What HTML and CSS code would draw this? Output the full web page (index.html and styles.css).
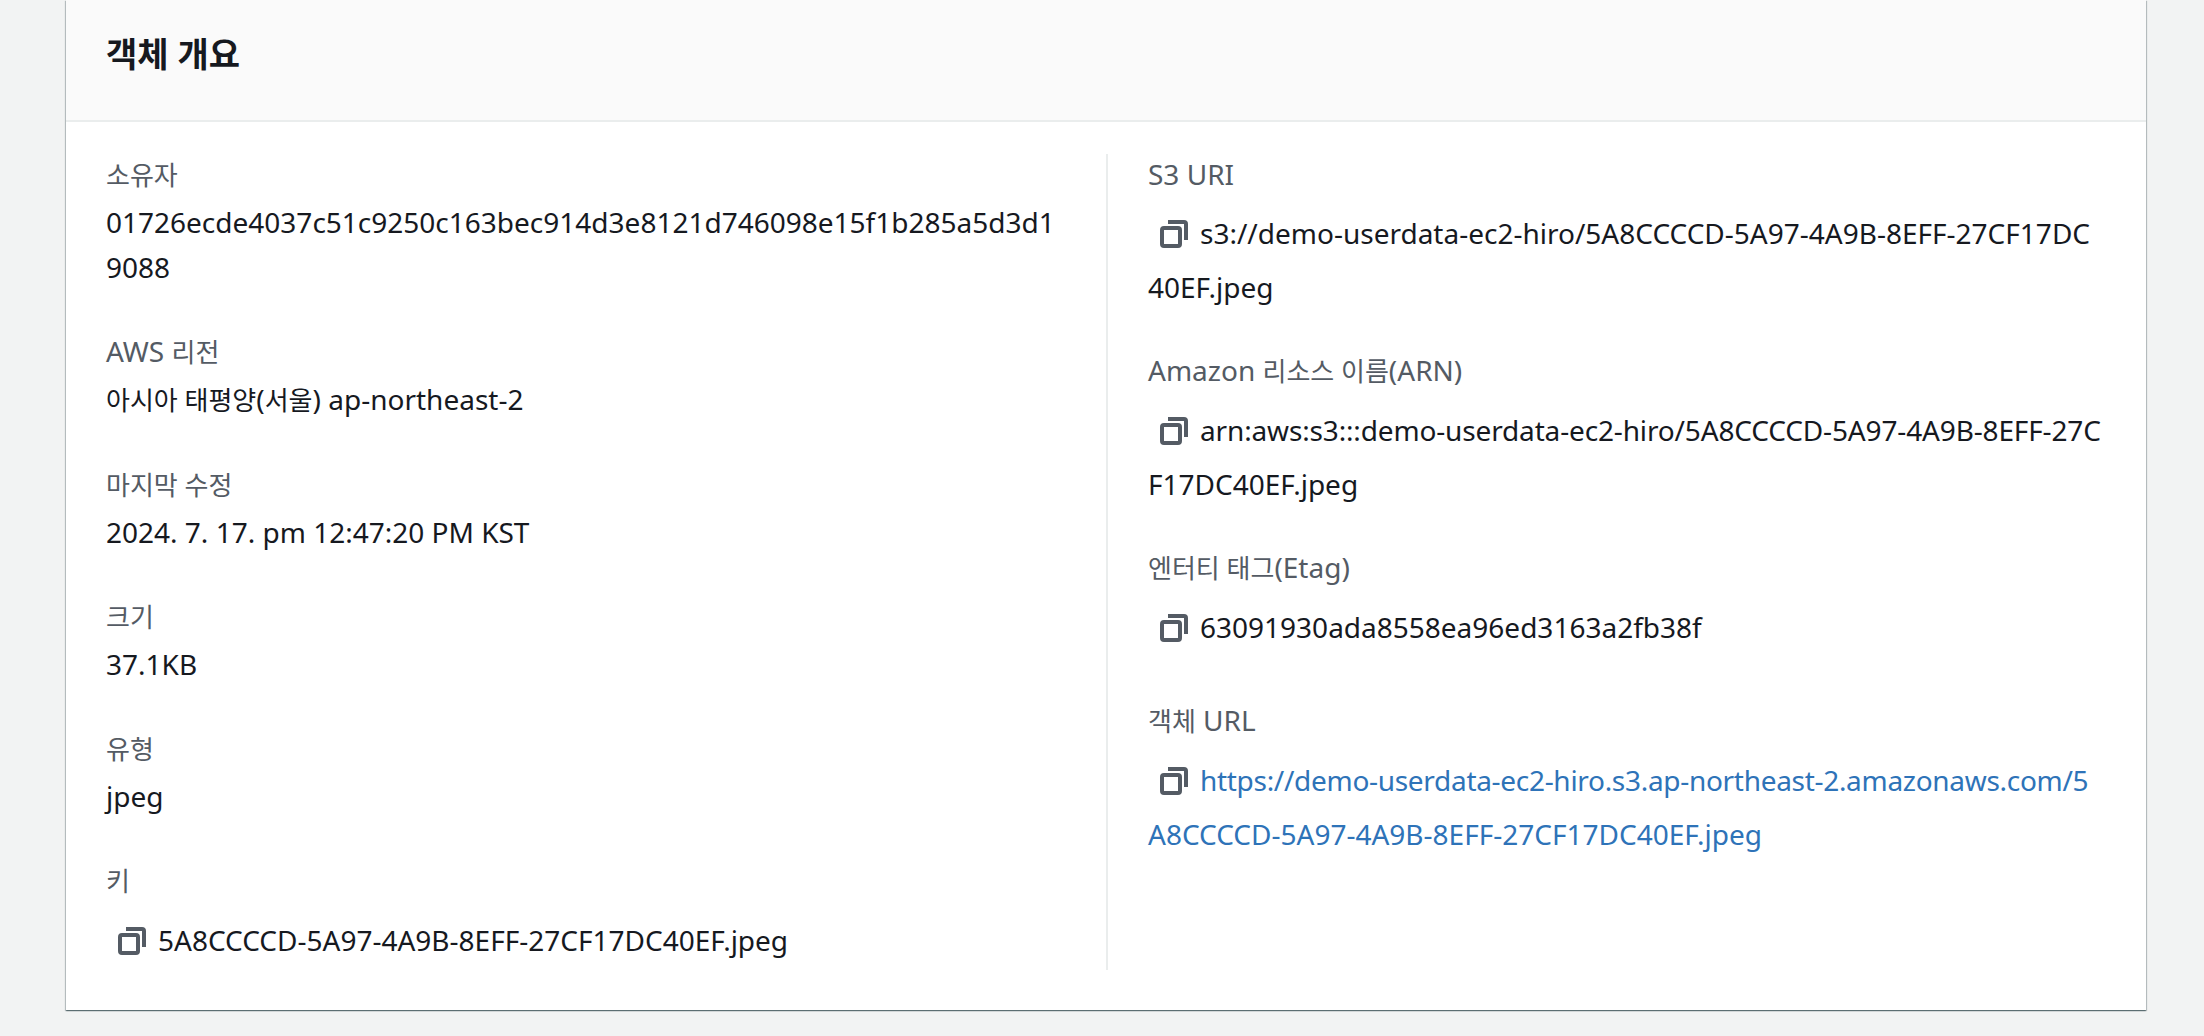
FILE: index.html
```html
<!DOCTYPE html>
<html lang="ko">
<head>
<meta charset="utf-8">
<title>객체 개요</title>
<link rel="stylesheet" href="styles.css">
</head>
<body>
<main class="card">
  <header class="card-header"><h2>객체 개요</h2></header>
  <div class="card-body">
    <section class="col col-left">
      <div class="item"><div class="label"><span class="ko">소유자</span></div><div class="value">01726ecde4037c51c9250c163bec914d3e8121d746098e15f1b285a5d3d19088</div></div>
      <div class="item"><div class="label">AWS <span class="ko">리전</span></div><div class="value"><span class="ko">아시아 태평양</span>(<span class="ko">서울</span>) ap-northeast-2</div></div>
      <div class="item"><div class="label"><span class="ko">마지막 수정</span></div><div class="value">2024. 7. 17. pm 12:47:20 PM KST</div></div>
      <div class="item"><div class="label"><span class="ko">크기</span></div><div class="value">37.1KB</div></div>
      <div class="item"><div class="label"><span class="ko">유형</span></div><div class="value">jpeg</div></div>
      <div class="item"><div class="label"><span class="ko">키</span></div><div class="value copy"><svg class="icon" viewBox="0 0 28 28"><path d="M8 2h16a2 2 0 0 1 2 2v16"/><rect x="2" y="8" width="18" height="18" rx="2"/></svg>5A8CCCCD-5A97-4A9B-8EFF-27CF17DC40EF.jpeg</div></div>
    </section>
    <section class="col col-right">
      <div class="item"><div class="label">S3 URI</div><div class="value copy"><svg class="icon" viewBox="0 0 28 28"><path d="M8 2h16a2 2 0 0 1 2 2v16"/><rect x="2" y="8" width="18" height="18" rx="2"/></svg>s3://demo-userdata-ec2-hiro/5A8CCCCD-5A97-4A9B-8EFF-27CF17DC40EF.jpeg</div></div>
      <div class="item"><div class="label">Amazon <span class="ko">리소스 이름</span>(ARN)</div><div class="value copy"><svg class="icon" viewBox="0 0 28 28"><path d="M8 2h16a2 2 0 0 1 2 2v16"/><rect x="2" y="8" width="18" height="18" rx="2"/></svg><span class="tight-arn">arn:aws:s3:::demo-userdata-ec2-hiro/5A8CCCCD-5A97-4A9B-8EFF-27C</span><br>F17DC40EF.jpeg</div></div>
      <div class="item item-single"><div class="label"><span class="ko">엔터티 태그</span>(Etag)</div><div class="value copy"><svg class="icon" viewBox="0 0 28 28"><path d="M8 2h16a2 2 0 0 1 2 2v16"/><rect x="2" y="8" width="18" height="18" rx="2"/></svg>63091930ada8558ea96ed3163a2fb38f</div></div>
      <div class="item"><div class="label"><span class="ko">객체</span> URL</div><div class="value copy"><svg class="icon" viewBox="0 0 28 28"><path d="M8 2h16a2 2 0 0 1 2 2v16"/><rect x="2" y="8" width="18" height="18" rx="2"/></svg><a href="#"><span class="tight-url">https://demo-userdata-ec2-hiro.s3.ap-northeast-2.amazonaws.com/5</span><br>A8CCCCD-5A97-4A9B-8EFF-27CF17DC40EF.jpeg</a></div></div>
    </section>
  </div>
</main>
</body>
</html>
```
FILE: styles.css
```css
html, body { margin: 0; height: 100%; }
body {
  background: #f2f3f3;
  font-family: "Noto Sans", "Noto Sans CJK KR", sans-serif;
  font-size: 28px;
  line-height: 45px;
  color: #16191f;
  overflow: hidden;
  padding: 0 58px 0 66px;
  box-sizing: border-box;
}
.card {
  background: #fff;
  height: 1010px;
  box-shadow: 0 1px 1px 0 rgba(0,28,36,.4), 1px 1px 1px 0 rgba(0,28,36,.2), -1px 1px 1px 0 rgba(0,28,36,.2);
  display: flex;
  flex-direction: column;
}
.card-header {
  height: 120px;
  flex: none;
  background: #fafafa;
  border-bottom: 2px solid #eaeded;
  padding: 0 40px;
  display: flex;
  align-items: center;
}
.card-header h2 { margin: 0 0 12px; font-size: 34px; font-weight: 700; line-height: 1; }
.card-body {
  display: grid;
  grid-template-columns: 1002px 1fr;
  grid-template-rows: minmax(0, 1fr);
  padding: 32px 40px 40px;
  flex: 1;
  min-height: 0;
}
.ko { font-size: 26px; }
.col-left { padding-right: 40px; border-right: 2px solid #eaeded; }
.col-right { padding-left: 40px; }
.item { margin-bottom: 36px; }
.col-left .item { margin-bottom: 41px; }
.item:last-child { margin-bottom: 0; }
.col-right .item-single { margin-bottom: 46px; }
.label { color: #545b64; margin-bottom: 2px; margin-top: -2px; }
.value { word-break: break-all; }
.copy { margin-top: 9px; line-height: 54px; }
.tight-arn { letter-spacing: -0.15px; }
.tight-url { letter-spacing: -0.3px; }
.icon {
  width: 28px; height: 28px;
  margin: 0 12px;
  vertical-align: -4px;
  fill: none;
  stroke: #545b64;
  stroke-width: 4;
}
a { color: #2e73b8; text-decoration: none; }
```
